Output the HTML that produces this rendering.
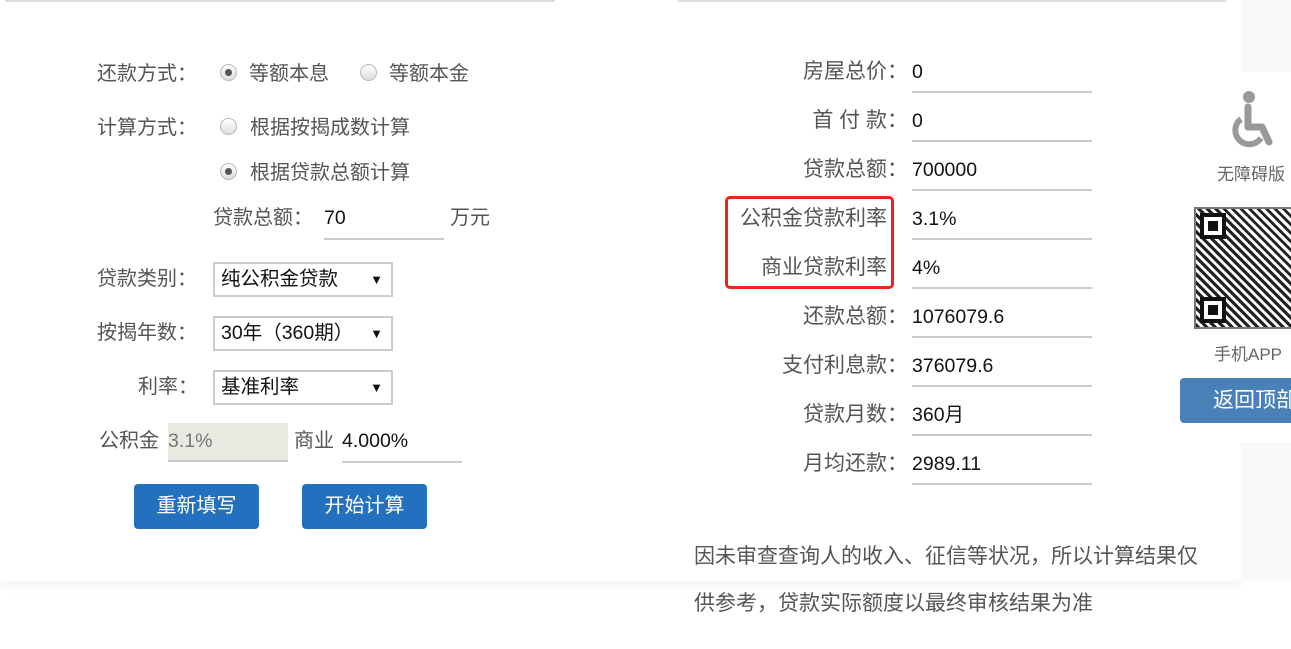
<!DOCTYPE html>
<html><head><meta charset="utf-8"><style>
*{margin:0;padding:0;box-sizing:border-box}
body{width:1291px;height:649px;overflow:hidden;background:#fff;position:relative;font-family:"Liberation Sans","Noto Sans CJK SC",sans-serif;}
.card{position:absolute;left:0;top:0;width:1241px;height:581px;background:#fff;box-shadow:0 4px 12px rgba(0,0,0,0.06)}
.gbg{position:absolute;left:1241px;top:0;width:50px;height:581px;background:#f9f9f9}
.ln{position:absolute;top:0;height:2px;background:#ddd}
.a{position:absolute;white-space:nowrap;font-size:20px;color:#555;line-height:24px}
.b{font-size:21px}
.c{display:inline-block;width:11px;overflow:hidden;vertical-align:top}
.v{position:absolute;white-space:nowrap;font-size:19.5px;color:#111;line-height:24px}
.r{text-align:right}
.rad{position:absolute;width:17px;height:17px;border-radius:50%;border:1px solid #bbb;background:linear-gradient(#fff,#ddd)}
.rad.on::after{content:"";position:absolute;left:4px;top:4px;width:7px;height:7px;border-radius:50%;background:#555}
.ul{position:absolute;height:2px;background:#ccc}
.sel{position:absolute;left:213px;width:180px;height:35px;border:2px solid #ccc;background:#fff;font-size:19.5px;color:#111;padding-left:6px;line-height:31px}
.sel::after{content:"▼";position:absolute;right:8px;top:0;font-size:13px}
.btn{position:absolute;top:484px;width:125px;height:45px;background:#2370be;color:#fff;border-radius:4px;font-size:20px;text-align:center;line-height:45px}
</style></head><body>
<div class="card"></div>
<div class="gbg"></div>
<div class="ln" style="left:5px;width:550px"></div>
<div class="ln" style="left:678px;width:548px"></div>

<div class="a" style="left:97px;top:62px">还款方式：</div>
<div class="rad on" style="left:220px;top:64px"></div><div class="a" style="left:249px;top:62px">等额本息</div>
<div class="rad" style="left:360px;top:64px"></div><div class="a" style="left:389px;top:62px">等额本金</div>
<div class="a" style="left:97px;top:116px">计算方式：</div>
<div class="rad" style="left:220px;top:118px"></div><div class="a" style="left:250px;top:116px">根据按揭成数计算</div>
<div class="rad on" style="left:220px;top:163px"></div><div class="a" style="left:250px;top:161px">根据贷款总额计算</div>
<div class="a" style="left:213px;top:206px">贷款总额：</div>
<div class="v" style="left:324px;top:206px">70</div>
<div class="ul" style="left:324px;top:238px;width:120px"></div>
<div class="a" style="left:450px;top:206px">万元</div>
<div class="a" style="left:97px;top:267px">贷款类别：</div>
<div class="sel" style="top:262px">纯公积金贷款</div>
<div class="a" style="left:97px;top:321px">按揭年数：</div>
<div class="sel" style="top:316px">30年（360期）</div>
<div class="a" style="left:138px;top:375px">利率：</div>
<div class="sel" style="top:370px">基准利率</div>
<div class="a" style="left:99px;top:429px">公积金</div>
<div style="position:absolute;left:168px;top:423px;width:120px;height:39px;background:#e9e8e1;border-bottom:2px solid #ccc"></div>
<div class="v" style="left:168px;top:429px;color:#777">3.1%</div>
<div class="a" style="left:294px;top:429px">商业</div>
<div class="v" style="left:342px;top:429px">4.000%</div>
<div class="ul" style="left:342px;top:461px;width:120px"></div>
<div class="btn" style="left:134px">重新填写</div>
<div class="btn" style="left:302px">开始计算</div>

<div class="a b r" style="left:680px;width:218px;top:60px">房屋总价<span class="c">：</span></div>
<div class="a b r" style="left:680px;width:218px;top:109px">首 付 款<span class="c">：</span></div>
<div class="a b r" style="left:680px;width:218px;top:158px">贷款总额<span class="c">：</span></div>
<div class="a b r" style="left:680px;width:207px;top:207px">公积金贷款利率</div>
<div class="a b r" style="left:680px;width:207px;top:256px">商业贷款利率</div>
<div class="a b r" style="left:680px;width:218px;top:305px">还款总额<span class="c">：</span></div>
<div class="a b r" style="left:680px;width:218px;top:354px">支付利息款<span class="c">：</span></div>
<div class="a b r" style="left:680px;width:218px;top:403px">贷款月数<span class="c">：</span></div>
<div class="a b r" style="left:680px;width:218px;top:452px">月均还款<span class="c">：</span></div>
<div style="position:absolute;left:725px;top:196px;width:169px;height:93px;border:3px solid #f0231a;border-radius:5px"></div>
<div class="v" style="left:912px;top:60px">0</div>
<div class="v" style="left:912px;top:109px">0</div>
<div class="v" style="left:912px;top:158px">700000</div>
<div class="v" style="left:912px;top:207px">3.1%</div>
<div class="v" style="left:912px;top:256px">4%</div>
<div class="v" style="left:912px;top:305px">1076079.6</div>
<div class="v" style="left:912px;top:354px">376079.6</div>
<div class="v" style="left:912px;top:403px">360月</div>
<div class="v" style="left:912px;top:452px">2989.11</div>
<div class="ul" style="left:912px;top:91px;width:180px"></div>
<div class="ul" style="left:912px;top:140px;width:180px"></div>
<div class="ul" style="left:912px;top:189px;width:180px"></div>
<div class="ul" style="left:912px;top:238px;width:180px"></div>
<div class="ul" style="left:912px;top:287px;width:180px"></div>
<div class="ul" style="left:912px;top:336px;width:180px"></div>
<div class="ul" style="left:912px;top:385px;width:180px"></div>
<div class="ul" style="left:912px;top:434px;width:180px"></div>
<div class="ul" style="left:912px;top:483px;width:180px"></div>
<div class="a b" style="left:694px;top:545px">因未审查查询人的收入、征信等状况，所以计算结果仅</div>
<div class="a b" style="left:694px;top:592px">供参考，贷款实际额度以最终审核结果为准</div>

<div style="position:absolute;left:1181px;top:72px;width:110px;height:370px;background:#fff"></div>
<svg style="position:absolute;left:1228px;top:90px" width="50" height="60" viewBox="0 0 50 60">
<circle cx="21" cy="7" r="6" fill="#999"/>
<path d="M20 17v20h14l7 15" stroke="#999" stroke-width="7" fill="none" stroke-linecap="round" stroke-linejoin="round"/>
<path d="M13 29a14 14 0 1 0 20 19" stroke="#999" stroke-width="6" fill="none"/>
</svg>
<div style="position:absolute;left:1217px;top:160px;font-size:17px;color:#666">无障碍版</div>
<div style="position:absolute;left:1194px;top:207px;width:110px;height:122px;border:2px solid #777;background:repeating-linear-gradient(45deg,#222 0 3px,#fff 3px 6px),#fff"></div>
<div style="position:absolute;left:1200px;top:213px;width:26px;height:26px;border:4px solid #111;background:#fff;box-shadow:inset 0 0 0 4px #fff,inset 0 0 0 10px #111"></div>
<div style="position:absolute;left:1200px;top:297px;width:26px;height:26px;border:4px solid #111;background:#fff;box-shadow:inset 0 0 0 4px #fff,inset 0 0 0 10px #111"></div>
<div style="position:absolute;left:1214px;top:340px;font-size:17px;color:#666">手机APP</div>
<div style="position:absolute;left:1180px;top:378px;width:130px;height:45px;background:#4a80b8;border-radius:4px;color:#fff;font-size:21px;line-height:45px;padding-left:33px">返回顶部</div>
</body></html>
